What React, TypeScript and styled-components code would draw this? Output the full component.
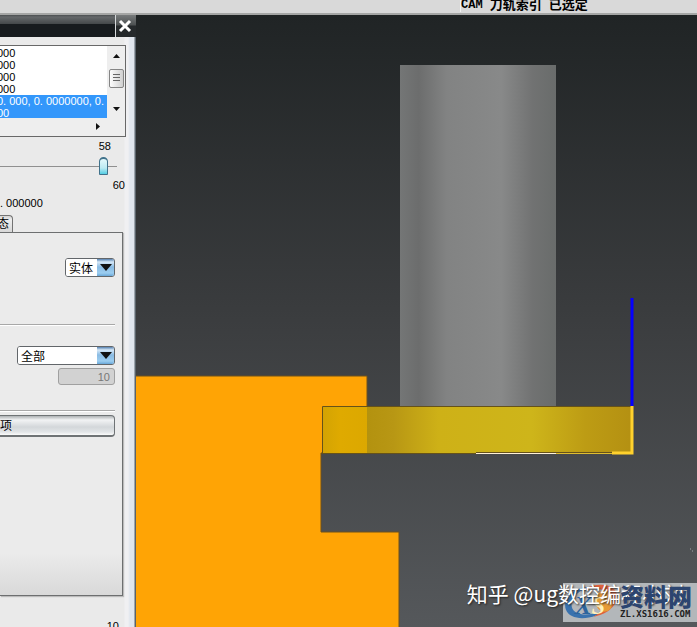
import React from "react";
import styled, { createGlobalStyle, css } from "styled-components";

const GlobalStyle = createGlobalStyle`
  * { box-sizing: border-box; margin: 0; }
  button, input, select { font: inherit; color: inherit; }
`;

const Page = styled.div`
  display: flex;
  flex-direction: column;
  height: 100vh;
  overflow: hidden;
  background: #2a2d2f;
  color: #000;
  font: 11px/12px "Liberation Sans", "Noto Sans CJK SC", sans-serif;
`;

const StatusBar = styled.header`
  display: grid;
  grid-template-columns: 66fr 34fr;
  flex: none;
  height: 15px;
  background: #d9d9d9;
  border-bottom: 2px solid #a5a6a5;
`;

const StatusText = styled.div`
  display: flex;
  align-items: flex-end;
  gap: 7px;
  height: 12px;
  border-left: 1px solid #f4f4f4;
  font: bold 13px/16px "Noto Sans CJK SC", sans-serif;
  white-space: nowrap;
`;

const StatusCode = styled.span`
  font: bold 12px/14px "Liberation Mono", monospace;
`;

const Workspace = styled.main`
  display: flex;
  flex: 1;
  min-height: 0;
`;

const Dialog = styled.aside`
  display: flex;
  flex-direction: column;
  flex: none;
  width: 136px;
  overflow: hidden;
  background: linear-gradient(90deg, #eaeaea 0 124px, #f0f0f2 125px 128px, #e0e6ee 130px 134px, #59636b 135px);
`;

const TitleBar = styled.div`
  display: flex;
  justify-content: flex-end;
  flex: none;
  height: 22px;
  background: linear-gradient(#4b4f51, #65686a 2px, #44484a 9px, #171b1e 9px);
`;

const CloseButton = styled.button`
  display: grid;
  place-items: center;
  width: 21px;
  padding: 0 2px 0 0;
  border: 0;
  border-left: 1px solid #d5d8da;
  background: linear-gradient(#777a7b, #4d5152 10px, #25292b 11px);
`;

const Contents = styled.div`
  display: flex;
  flex-direction: column;
  flex: none;
  padding: 8px 10px 0 0;
`;

const ListFrame = styled.div`
  display: flex;
  flex-direction: column;
  height: 92px;
  border: 1px solid #686868;
  border-left: 0;
  background: #eee;
`;

const ListBody = styled.div`
  display: flex;
`;

const PathList = styled.ul`
  flex: 1;
  min-width: 0;
  height: 72px;
  padding: 1px 0 0;
  overflow: hidden;
  list-style: none;
  background: #fff;
`;

const PathRow = styled.li<{ $selected?: boolean }>`
  height: 12px;
  overflow: hidden;
  text-indent: -3px;
  white-space: pre;
  ${(p) => p.$selected && css`
    background: #3397fb;
    color: #fff;
  `}
`;

const ScrollColumn = styled.div`
  display: flex;
  flex-direction: column;
  align-items: center;
  justify-content: space-between;
  width: 18px;
  padding: 3px 0 2px;
`;

const ArrowButton = styled.button`
  display: grid;
  place-items: center;
  width: 16px;
  height: 14px;
  padding: 0;
  border: 0;
  background: none;
`;

const ScrollThumb = styled.div`
  display: grid;
  place-items: center;
  width: 15px;
  height: 19px;
  margin-bottom: 8px;
  border: 1px solid #858585;
  border-radius: 2px;
  background: linear-gradient(90deg, #fcfcfc, #d0d0d0);
`;

const ScrollRow = styled.div`
  display: flex;
  justify-content: flex-end;
  padding: 1px 19px 0 0;
`;

const Readout = styled.output<{ $inset: number; $top: number }>`
  display: block;
  padding-right: ${(p) => p.$inset}px;
  margin-top: ${(p) => p.$top}px;
  text-align: right;
  white-space: nowrap;
`;

const Slider = styled.input`
  appearance: none;
  align-self: flex-end;
  width: 192px;
  height: 20px;
  margin: 4px 9px 0 0;
  background: linear-gradient(#909090, #909090) 0 10px / 100% 1px no-repeat;
  &::-webkit-slider-thumb {
    appearance: none;
    width: 9px;
    height: 18px;
    border: 2px solid #40728b;
    border-width: 2px 1px 1px;
    border-radius: 5px 5px 1px 1px;
    background: linear-gradient(#e4f9fc, #bceaf2 9px, #55cee4);
  }
`;

const Tab = styled.button`
  display: flex;
  align-items: center;
  justify-content: flex-end;
  align-self: flex-start;
  width: 13px;
  height: 17px;
  margin-top: 6px;
  padding: 0 3px 0 0;
  border: 1px solid #737373;
  border-width: 1px 1px 0 0;
  border-radius: 0 4px 0 0;
  background: linear-gradient(#d5d5d5, #eee 4px, #d8d8d8);
  font-size: 12px;
`;

const TabPanel = styled.section`
  display: flex;
  flex-direction: column;
  align-items: flex-end;
  height: 364px;
  margin-right: 3px;
  padding: 25px 7px 0 0;
  border: 1px solid #6d6f70;
  border-left: 0;
  background: linear-gradient(#ebebeb 320px, #d9d9d9);
  box-shadow: 1px 1px 1px #bbb;
`;

const Combo = styled.label<{ $wide?: boolean }>`
  display: flex;
  width: ${(p) => (p.$wide ? 98 : 50)}px;
  height: 19px;
  overflow: hidden;
  border: 1px solid #62666a;
  border-radius: 3px;
  background: #fff;
`;

const ComboSelect = styled.select`
  appearance: none;
  flex: 1;
  min-width: 0;
  padding: 0 0 0 3px;
  border: 0;
  background: #fff;
  font: 12px/16px "Noto Sans CJK SC", sans-serif;
`;

const ComboArrow = styled.span`
  display: grid;
  place-items: center;
  width: 17px;
  background: linear-gradient(#5480b0, #d7e9f8 3px, #8abbe3 8px, #9bcdf0 14px, #6aa8d8);
`;

const Rule = styled.hr<{ $top: number }>`
  width: 100%;
  height: 2px;
  margin-top: ${(p) => p.$top}px;
  border: 0;
  border-top: 1px solid #a8a8a8;
  background: #fff;
`;

const Spacer = styled.div`
  height: 20px;
`;

const CountInput = styled.input`
  width: 57px;
  height: 17px;
  margin-top: 3px;
  padding: 0 4px 0 0;
  border: 1px solid #a0a0a0;
  border-radius: 3px;
  background: #d2d2d2;
  text-align: right;
  &:disabled { color: #777; }
`;

const OptionsButton = styled.button`
  width: 100%;
  height: 22px;
  margin-top: 3px;
  padding: 0;
  border: 1px solid #6f7375;
  border-left: 0;
  border-bottom-width: 2px;
  border-radius: 0 4px 4px 0;
  background: linear-gradient(#aeb2b4, #f2f3f4 4px, #d3d7da 11px, #e2e5e7 16px, #fbfbfb);
  font-size: 12px;
  text-align: left;
`;

const Viewport = styled.section`
  position: relative;
  flex: 1;
  min-width: 0;
  overflow: hidden;
  background: linear-gradient(#202425, #3a3c3e 48%, #55585b);
`;

const Scene = styled.svg`
  display: block;
  width: 100%;
  height: 100%;
`;

const AuthorMark = styled.div`
  position: absolute;
  z-index: 1;
  right: 13px;
  bottom: 18px;
  color: #fff;
  font: 21px/32px "Noto Sans CJK SC", sans-serif;
  text-shadow: 1px 1px 2px #222;
  white-space: nowrap;
`;

const SiteMark = styled.div`
  position: absolute;
  right: 0;
  bottom: 5px;
  display: flex;
  width: 134px;
  height: 39px;
  background: #b3b7ba;
`;

const SiteLogo = styled.svg`
  flex: none;
  width: 57px;
  height: 39px;
`;

const SiteLines = styled.div`
  position: relative;
  z-index: 2;
`;

const SiteName = styled.div`
  color: #2c4570;
  font: 900 24px/26px "Noto Sans CJK SC", sans-serif;
  white-space: nowrap;
`;

const SiteAddress = styled.div`
  color: #222;
  font: bold 9px/10px "DejaVu Sans Mono", monospace;
  white-space: nowrap;
`;

const rows = [
  { text: "000" },
  { text: "000" },
  { text: "000" },
  { text: "000" },
  { text: "0. 000, 0. 0000000, 0. 000", selected: true },
  { text: "00", selected: true },
];

function Triangle({ points, width = 7, height = 4 }: { points: string; width?: number; height?: number }) {
  return (
    <svg width={width} height={height} viewBox={`0 0 ${width} ${height}`} aria-hidden="true">
      <polygon points={points} fill="#111" />
    </svg>
  );
}

function Dropdown({ label, value, wide }: { label: string; value: string; wide?: boolean }) {
  return (
    <Combo $wide={wide}>
      <ComboSelect aria-label={label} defaultValue={value}>
        <option>{value}</option>
      </ComboSelect>
      <ComboArrow><Triangle width={12} height={7} points="0,0 12,0 6,7" /></ComboArrow>
    </Combo>
  );
}

function ToolScene() {
  return (
    <Scene viewBox="0 0 561 612" preserveAspectRatio="xMinYMin slice" role="img" aria-label="CAM">
      <defs>
        <linearGradient id="shank">
          <stop offset="0" stopColor="#747676" />
          <stop offset=".12" stopColor="#6c6d6d" />
          <stop offset=".3" stopColor="#828383" />
          <stop offset=".65" stopColor="#888989" />
          <stop offset=".85" stopColor="#717272" />
          <stop offset="1" stopColor="#696c6b" />
        </linearGradient>
        <linearGradient id="cutter">
          <stop offset="0" stopColor="#b3920f" />
          <stop offset=".1" stopColor="#b89714" />
          <stop offset=".27" stopColor="#ceb117" />
          <stop offset=".62" stopColor="#ceb51a" />
          <stop offset=".82" stopColor="#bd9c14" />
          <stop offset="1" stopColor="#b49012" />
        </linearGradient>
        <linearGradient id="overlap">
          <stop offset="0" stopColor="#d3a303" />
          <stop offset=".4" stopColor="#dfaa00" />
          <stop offset="1" stopColor="#dca800" />
        </linearGradient>
      </defs>
      <path d="M-1 361H231V438H185V517H263V620H-1Z" fill="#ffa405" stroke="#6d501f" />
      <rect x="264" y="50" width="156" height="342" fill="url(#shank)" />
      <rect x="231" y="391" width="266" height="47" fill="url(#cutter)" />
      <rect x="187" y="391" width="44" height="47" fill="url(#overlap)" />
      <path d="M186.5 438V391.5H496M185 438.5H340" fill="none" stroke="#66521a" />
      <path d="M340 437.5H476" stroke="#66521a" />
      <path d="M340 438.5H420" stroke="#fff1d8" />
      <path d="M420 438.5H476" stroke="#e0bd30" />
      <path d="M496 283V391" stroke="#0600ff" strokeWidth="3" />
      <path d="M496 391V438H476" fill="none" stroke="#ffd12d" strokeWidth="3" />
      <path d="M554 534h1M556 536h1" stroke="#a5a8aa" />
    </Scene>
  );
}

export default function App() {
  return (
    <Page>
      <GlobalStyle />
      <StatusBar>
        <span />
        <StatusText><StatusCode>CAM</StatusCode><span>刀轨索引</span><span>已选定</span></StatusText>
      </StatusBar>
      <Workspace>
        <Dialog>
          <TitleBar>
            <CloseButton aria-label="关闭">
              <svg width="14" height="14" viewBox="0 0 14 14"><path d="M2 2L12 12M12 2L2 12" stroke="#fff" strokeWidth="3" /></svg>
            </CloseButton>
          </TitleBar>
          <Contents>
            <ListFrame>
              <ListBody>
                <PathList>
                  {rows.map((row, i) => <PathRow key={i} $selected={row.selected}>{row.text}</PathRow>)}
                </PathList>
                <ScrollColumn>
                  <ArrowButton aria-label="向上"><Triangle points="0,4 3.5,0 7,4" /></ArrowButton>
                  <ScrollThumb>
                    <svg width="7" height="9" viewBox="0 0 7 9"><path d="M0 .5h7M0 3.5h7M0 6.5h7" stroke="#666" /></svg>
                  </ScrollThumb>
                  <ArrowButton aria-label="向下"><Triangle points="0,0 7,0 3.5,4" /></ArrowButton>
                </ScrollColumn>
              </ListBody>
              <ScrollRow>
                <ArrowButton aria-label="向右"><Triangle width={4} height={7} points="0,0 4,3.5 0,7" /></ArrowButton>
              </ScrollRow>
            </ListFrame>
            <Readout $inset={15} $top={3}>58</Readout>
            <Slider type="range" min={0} max={61} defaultValue={58} aria-label="位置" />
            <Readout $inset={1} $top={3}>60</Readout>
            <Readout $inset={84} $top={6}>. 000000</Readout>
            <Tab>态</Tab>
            <TabPanel>
              <Dropdown label="显示" value="实体" />
              <Rule $top={47} />
              <Spacer />
              <Dropdown label="范围" value="全部" wide />
              <CountInput aria-label="数量" disabled defaultValue="10" />
              <Rule $top={25} />
              <OptionsButton>项</OptionsButton>
            </TabPanel>
            <Readout $inset={7} $top={24}>10</Readout>
          </Contents>
        </Dialog>
        <Viewport>
          <ToolScene />
          <SiteMark>
            <SiteLogo viewBox="0 0 58 39" aria-hidden="true">
              <path d="M27 4C10 3-1 17 3 27C8 40 34 37 46 25C31 34 11 34 9 24C7 16 15 7 27 4Z" fill="#3972ae" />
              <path d="M21 6C38-3 57 2 55 15C53 27 39 33 31 34C46 25 50 15 43 9C38 4 29 4 21 6Z" fill="#df623d" />
              <ellipse cx="42" cy="18" rx="9" ry="11" fill="#e79b37" />
              <text x="12" y="31" fill="#2e659d" fontFamily="Liberation Serif" fontSize="26" fontStyle="italic" fontWeight="bold">X</text>
              <text x="29" y="31" fill="#fff0bb" fontFamily="Liberation Serif" fontSize="25" fontStyle="italic" fontWeight="bold">S</text>
            </SiteLogo>
            <SiteLines>
              <SiteName>资料网</SiteName>
              <SiteAddress>ZL.XS1616.COM</SiteAddress>
            </SiteLines>
          </SiteMark>
          <AuthorMark>知乎 @ug数控编程小刘</AuthorMark>
        </Viewport>
      </Workspace>
    </Page>
  );
}
